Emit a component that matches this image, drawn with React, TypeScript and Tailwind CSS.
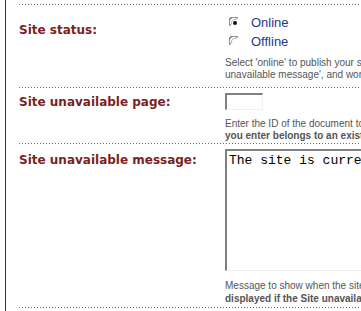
import React from 'react';

const dots = 'h-px bg-[linear-gradient(to_right,#6b6b6b_1px,transparent_1px)] bg-[length:3px_1px]';

function Radio({ checked }: { checked?: boolean }) {
  return (
    <svg width="12" height="12" viewBox="0 0 12 12" className="shrink-0">
      <circle cx="6" cy="6" r="5.5" fill="#fff" />
      <path d="M1.4 8.6A5 5 0 0 1 8.6 1.4" fill="none" stroke="#8a8a8a" strokeWidth="1.8" />
      <path d="M2.8 7.4A3.4 3.4 0 0 1 7.4 2.8" fill="none" stroke="#b0b0b0" strokeWidth="1" />
      {checked && <circle cx="6" cy="6" r="2" fill="#111" />}
    </svg>
  );
}

function Row({
  label,
  labelTop,
  children,
}: {
  label: string;
  labelTop: string;
  children: React.ReactNode;
}) {
  return (
    <>
      <div className="grid grid-cols-[206px_1fr]">
        <div className={`${labelTop} whitespace-nowrap font-['DejaVu_Sans',sans-serif] text-[12px] leading-[15px] font-bold text-[#7a1f1f]`}>
          {label}
        </div>
        <div className="min-w-0 overflow-hidden">{children}</div>
      </div>
      <div className={dots} />
    </>
  );
}

const help = "whitespace-nowrap font-['Liberation_Sans',sans-serif] text-[10px] leading-[12px] text-[#555]";
const option = "flex h-[19px] items-center gap-[10px] pl-[4px] font-['Liberation_Sans',sans-serif] text-[13px] text-[#1e3a8a]";

export default function App() {
  return (
    <div className="h-[311px] w-[361px] overflow-hidden bg-white">
      <div className="flex h-full">
        <div className="ml-[5px] w-px shrink-0 bg-[#1c3a5c]" />
        <div className="ml-[13px] min-w-0 flex-1 pt-[4px]">
          <div className={dots} />

          <Row label="Site status:" labelTop="pt-[18px]">
            <div className="pt-[8px] pb-[6px]">
              <div className={option}>
                <Radio checked />
                <span>Online</span>
              </div>
              <div className={option}>
                <Radio />
                <span>Offline</span>
              </div>
              <div className={`mt-[6px] ${help}`}>
                <div>Select 'online' to publish your site.</div>
                <div>unavailable message', and won't be seen.</div>
              </div>
            </div>
          </Row>

          <Row label="Site unavailable page:" labelTop="pt-[7px]">
            <div className="pt-[5px] pb-[1px]">
              <div className="h-[17px] w-[38px] border-t-2 border-l-2 border-t-[#808080] border-l-[#808080] border-r border-b border-r-[#f0f0f0] border-b-[#f0f0f0] bg-white" />
              <div className={`mt-[8px] ${help}`}>
                <div>Enter the ID of the document to show.</div>
                <div className="font-bold">you enter belongs to an existing one.</div>
              </div>
            </div>
          </Row>

          <Row label="Site unavailable message:" labelTop="pt-[9px]">
            <div className="pt-[5px] pb-[2px]">
              <div className="h-[122px] w-[200px] overflow-hidden border-t-2 border-l-2 border-t-[#808080] border-l-[#808080] border-r border-b border-r-[#f0f0f0] border-b-[#f0f0f0] bg-white pl-[2px] pt-[2px] font-['Liberation_Mono',monospace] text-[13px] leading-[15px] whitespace-nowrap text-black">
                The site is currently unavailable
              </div>
              <div className={`mt-[8px] ${help} leading-[13px]`}>
                <div>Message to show when the site is off.</div>
                <div className="font-bold">displayed if the Site unavailable page.</div>
              </div>
            </div>
          </Row>
        </div>
      </div>
    </div>
  );
}
